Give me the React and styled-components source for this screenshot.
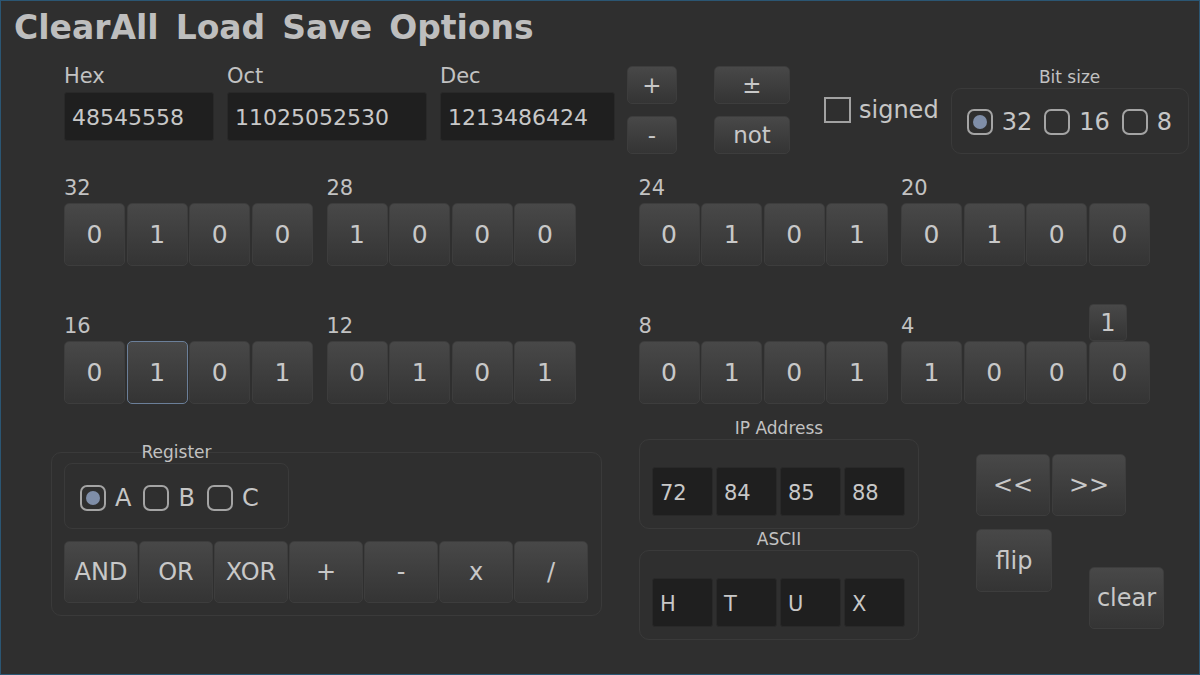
import React from "react";
import styled, { createGlobalStyle } from "styled-components";

const GlobalStyle = createGlobalStyle`
  html, body {
    margin: 0;
    padding: 0;
    background: #2f2f2f;
  }
  body {
    font-family: "DejaVu Sans", "Liberation Sans", sans-serif;
  }
`;

const Window = styled.div`
  box-sizing: border-box;
  width: 1200px;
  height: 675px;
  border: 1px solid #2b5673;
  background: #2f2f2f;
  color: #c6c6c6;
  font-family: "DejaVu Sans", "Liberation Sans", sans-serif;
  display: flex;
  flex-direction: column;
  overflow: hidden;
`;

const MenuBar = styled.div`
  display: flex;
  gap: 17px;
  padding: 7px 0 0 13px;
  height: 37px;
`;

const MenuItem = styled.span`
  font-size: 33px;
  font-weight: bold;
  line-height: 40px;
  color: #bebebe;
`;

const Main = styled.div`
  padding-left: 63px;
  display: flex;
  flex-direction: column;
`;

/* ---------- top row ---------- */

const TopRow = styled.div`
  display: flex;
  align-items: flex-start;
  margin-top: 19px;
  height: 90px;
`;

const Field = styled.div`
  display: flex;
  flex-direction: column;
  width: ${(p) => p.$w}px;
  margin-right: 13px;
`;

const FieldLabel = styled.span`
  font-size: 21px;
  line-height: 24px;
  height: 28px;
  color: #c2c2c2;
`;

const ValueBox = styled.div`
  box-sizing: border-box;
  width: ${(p) => (p.$w ? `${p.$w}px` : "100%")};
  height: 49px;
  background: #1f1f1f;
  border: 1px solid #292929;
  border-radius: 3px;
  padding: 2px 0 0 7px;
  display: flex;
  align-items: center;
  font-size: ${(p) => p.$fs || 22}px;
  color: #c8c8c8;
`;

const Btn = styled.button`
  box-sizing: border-box;
  padding: 0;
  border: 1px solid ${(p) => (p.$focus ? "#6b7f99" : "#3d3d3d")};
  border-radius: 5px;
  background: linear-gradient(#484848, #343434);
  color: #c8c8c8;
  font-family: "DejaVu Sans", "Liberation Sans", sans-serif;
  font-size: 24px;
  cursor: pointer;
`;

const StackCol = styled.div`
  display: flex;
  flex-direction: column;
  gap: 12px;
  margin-top: 2px;
  margin-left: ${(p) => p.$ml || 0}px;
`;

const SmallOpButton = styled(Btn)`
  width: ${(p) => p.$w}px;
  height: 38px;
  font-size: 23px;
`;

const CheckRow = styled.label`
  align-self: center;
  display: flex;
  align-items: center;
  gap: 8px;
  margin-left: 34px;
  margin-top: 2px;
  font-size: 24px;
  color: #c6c6c6;
`;

const CheckSquare = styled.span`
  box-sizing: border-box;
  width: 27px;
  height: 26px;
  border: 2px solid #a2a2a2;
`;

const Group = styled.div`
  display: flex;
  flex-direction: column;
  margin-left: ${(p) => p.$ml || 0}px;
  margin-top: ${(p) => p.$mt || 0}px;
`;

const GroupLabel = styled.span`
  font-size: 17px;
  line-height: 21px;
  text-align: center;
  color: #c2c2c2;
`;

const BitSizeBox = styled.div`
  box-sizing: border-box;
  width: 238px;
  height: 66px;
  border: 1px solid #3a3a3a;
  border-radius: 10px;
  padding: 2px 0 0 15px;
  display: flex;
  align-items: center;
  gap: 12px;
`;

const RadioItem = styled.span`
  display: flex;
  align-items: center;
  gap: 9px;
  font-size: 24px;
  color: #c6c6c6;
`;

const RadioMark = styled.span`
  box-sizing: border-box;
  width: 26px;
  height: 26px;
  border: 2px solid #a4a4a4;
  border-radius: 7px;
  display: flex;
  align-items: center;
  justify-content: center;

  &::after {
    content: "";
    display: ${(p) => (p.$on ? "block" : "none")};
    width: 14px;
    height: 14px;
    border-radius: 50%;
    background: #7f8ea8;
  }
`;

/* ---------- bits ---------- */

const BitsArea = styled.div`
  display: flex;
  flex-direction: column;
  gap: 38px;
  margin-top: 12px;
`;

const BitRow = styled.div`
  display: flex;
  gap: 63px;
`;

const Half = styled.div`
  display: flex;
  gap: 13.5px;
`;

const Nibble = styled.div`
  width: 249px;
  display: flex;
  flex-direction: column;
`;

const NibbleHead = styled.div`
  height: 37px;
  display: flex;
  justify-content: space-between;
  align-items: flex-end;
`;

const NibbleLabel = styled.span`
  font-size: 21px;
  line-height: 24px;
  margin-bottom: 3px;
  color: #c2c2c2;
`;

const CarryButton = styled(Btn)`
  width: 38px;
  height: 37px;
  margin-right: 23px;
  border-radius: 4px;
  font-size: 24px;
`;

const Bits = styled.div`
  display: flex;
  gap: 1.5px;
`;

const BitButton = styled(Btn)`
  flex: 1;
  height: 63px;
  font-size: 25px;
`;

/* ---------- lower area ---------- */

const Lower = styled.div`
  display: flex;
  align-items: flex-start;
  margin-top: 14px;
  margin-left: -13px;
`;

const RegisterGroup = styled.div`
  width: 551px;
  margin-top: 24px;
  display: flex;
  flex-direction: column;
`;

const RegisterLabel = styled(GroupLabel)`
  position: relative;
  z-index: 1;
  width: 225px;
  margin-left: 13px;
`;

const RegisterBox = styled.div`
  box-sizing: border-box;
  margin-top: -11px;
  border: 1px solid #3a3a3a;
  border-radius: 10px;
  padding: 10px 12px 12px;
  display: flex;
  flex-direction: column;
  gap: 12px;
`;

const RadioBox = styled.div`
  box-sizing: border-box;
  width: 225px;
  height: 66px;
  border: 1px solid #3a3a3a;
  border-radius: 8px;
  padding: 3px 0 0 15px;
  display: flex;
  align-items: center;
  gap: 12px;
`;

const OpRow = styled.div`
  display: flex;
  gap: 1px;
`;

const OpButton = styled(Btn)`
  width: 74px;
  height: 62px;
  font-size: 24px;
`;

const ConvCol = styled.div`
  width: 280px;
  margin-left: 37px;
  display: flex;
  flex-direction: column;
`;

const ConvBox = styled.div`
  box-sizing: border-box;
  height: 90px;
  border: 1px solid #3a3a3a;
  border-radius: 10px;
  padding: 27px 13px 12px 12px;
  display: flex;
  gap: 3px;
`;

const ShiftArea = styled.div`
  margin-left: 57px;
  margin-top: 36px;
  display: flex;
  flex-direction: column;
  gap: 13px;
`;

const ShiftRow = styled.div`
  display: flex;
  gap: ${(p) => p.$gap}px;
  align-items: flex-start;
`;

const ActionButton = styled(Btn)`
  width: ${(p) => p.$w}px;
  height: ${(p) => p.$h}px;
  margin-top: ${(p) => p.$mt || 0}px;
  font-size: 24px;
`;

const bitRows = [
  [
    [["32", "0100"], ["28", "1000"]],
    [["24", "0101"], ["20", "0100"]],
  ],
  [
    [["16", "0101"], ["12", "0101"]],
    [["8", "0101"], ["4", "1000"]],
  ],
];

export default function App() {
  return (
    <>
      <GlobalStyle />
      <Window>
        <MenuBar>
          <MenuItem>ClearAll</MenuItem>
          <MenuItem>Load</MenuItem>
          <MenuItem>Save</MenuItem>
          <MenuItem>Options</MenuItem>
        </MenuBar>

        <Main>
          <TopRow>
            <Field $w={150}>
              <FieldLabel>Hex</FieldLabel>
              <ValueBox>48545558</ValueBox>
            </Field>
            <Field $w={200}>
              <FieldLabel>Oct</FieldLabel>
              <ValueBox>11025052530</ValueBox>
            </Field>
            <Field $w={175}>
              <FieldLabel>Dec</FieldLabel>
              <ValueBox>1213486424</ValueBox>
            </Field>
            <StackCol $ml={-1}>
              <SmallOpButton $w={50}>+</SmallOpButton>
              <SmallOpButton $w={50}>-</SmallOpButton>
            </StackCol>
            <StackCol $ml={37}>
              <SmallOpButton $w={76}>±</SmallOpButton>
              <SmallOpButton $w={76}>not</SmallOpButton>
            </StackCol>
            <CheckRow>
              <CheckSquare />
              signed
            </CheckRow>
            <Group $ml={12} $mt={3}>
              <GroupLabel>Bit size</GroupLabel>
              <BitSizeBox>
                <RadioItem>
                  <RadioMark $on />
                  32
                </RadioItem>
                <RadioItem>
                  <RadioMark />
                  16
                </RadioItem>
                <RadioItem>
                  <RadioMark />8
                </RadioItem>
              </BitSizeBox>
            </Group>
          </TopRow>

          <BitsArea>
            {bitRows.map((row, r) => (
              <BitRow key={r}>
                {row.map((half, h) => (
                  <Half key={h}>
                    {half.map(([label, bits]) => (
                      <Nibble key={label}>
                        <NibbleHead>
                          <NibbleLabel>{label}</NibbleLabel>
                          {label === "4" && <CarryButton>1</CarryButton>}
                        </NibbleHead>
                        <Bits>
                          {bits.split("").map((b, i) => (
                            <BitButton
                              key={i}
                              $focus={label === "16" && i === 1}
                            >
                              {b}
                            </BitButton>
                          ))}
                        </Bits>
                      </Nibble>
                    ))}
                  </Half>
                ))}
              </BitRow>
            ))}
          </BitsArea>

          <Lower>
            <RegisterGroup>
              <RegisterLabel>Register</RegisterLabel>
              <RegisterBox>
                <RadioBox>
                  <RadioItem>
                    <RadioMark $on />A
                  </RadioItem>
                  <RadioItem>
                    <RadioMark />B
                  </RadioItem>
                  <RadioItem>
                    <RadioMark />C
                  </RadioItem>
                </RadioBox>
                <OpRow>
                  {["AND", "OR", "XOR", "+", "-", "x", "/"].map((op) => (
                    <OpButton key={op}>{op}</OpButton>
                  ))}
                </OpRow>
              </RegisterBox>
            </RegisterGroup>

            <ConvCol>
              <GroupLabel>IP Address</GroupLabel>
              <ConvBox>
                {["72", "84", "85", "88"].map((v) => (
                  <ValueBox key={v} $w={61} $fs={21}>
                    {v}
                  </ValueBox>
                ))}
              </ConvBox>
              <GroupLabel>ASCII</GroupLabel>
              <ConvBox>
                {["H", "T", "U", "X"].map((v) => (
                  <ValueBox key={v} $w={61} $fs={21}>
                    {v}
                  </ValueBox>
                ))}
              </ConvBox>
            </ConvCol>

            <ShiftArea>
              <ShiftRow $gap={2}>
                <ActionButton $w={74} $h={62}>
                  {"<<"}
                </ActionButton>
                <ActionButton $w={74} $h={62}>
                  {">>"}
                </ActionButton>
              </ShiftRow>
              <ShiftRow $gap={37}>
                <ActionButton $w={76} $h={63}>
                  flip
                </ActionButton>
                <ActionButton $w={75} $h={62} $mt={38}>
                  clear
                </ActionButton>
              </ShiftRow>
            </ShiftArea>
          </Lower>
        </Main>
      </Window>
    </>
  );
}
